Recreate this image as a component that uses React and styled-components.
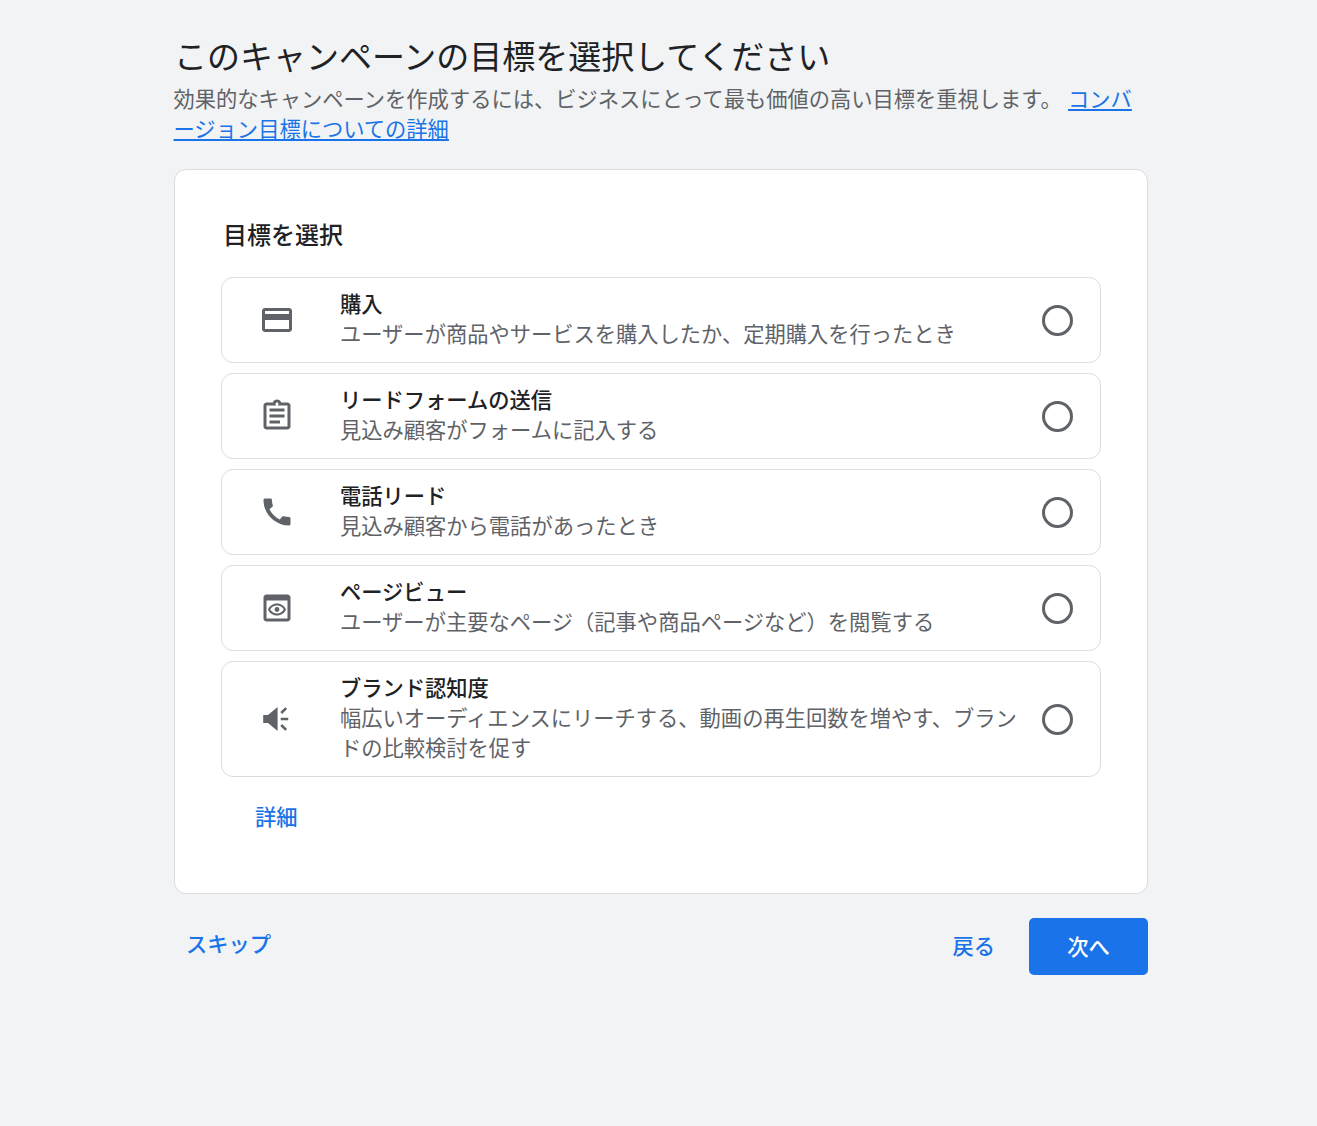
import styled, { createGlobalStyle } from "styled-components";

const GlobalStyle = createGlobalStyle`
  html, body {
    margin: 0;
    padding: 0;
    background: #f1f3f4;
    font-family: Roboto, "Noto Sans CJK JP", sans-serif;
  }
`;

const CardIcon = () => (
  <svg viewBox="0 0 24 24" fill="currentColor">
    <path d="M20 4H4c-1.11 0-1.99.89-1.99 2L2 18c0 1.11.89 2 2 2h16c1.11 0 2-.89 2-2V6c0-1.11-.89-2-2-2zm0 14H4v-6h16v6zm0-10H4V6h16v2z" />
  </svg>
);

const ClipboardIcon = () => (
  <svg viewBox="0 0 24 24" fill="currentColor">
    <path d="M19 3h-4.18C14.4 1.84 13.3 1 12 1c-1.3 0-2.4.84-2.82 2H5c-1.1 0-2 .9-2 2v14c0 1.1.9 2 2 2h14c1.1 0 2-.9 2-2V5c0-1.1-.9-2-2-2zm-7 0c.55 0 1 .45 1 1s-.45 1-1 1-1-.45-1-1 .45-1 1-1zm7 16H5V5h14v14zM7 15h7v2H7zm0-4h10v2H7zm0-4h10v2H7z" />
  </svg>
);

const PhoneIcon = () => (
  <svg viewBox="0 0 24 24" fill="currentColor">
    <path d="M20.01 15.38c-1.23 0-2.42-.2-3.53-.56-.35-.12-.74-.03-1.01.24l-1.57 1.97c-2.83-1.35-5.48-3.9-6.89-6.83l1.95-1.66c.27-.28.35-.67.24-1.02-.37-1.11-.56-2.3-.56-3.53 0-.54-.45-.99-.99-.99H4.19C3.65 3 3 3.24 3 3.99 3 13.28 10.73 21 20.01 21c.71 0 .99-.63.99-1.18v-3.45c0-.54-.45-.99-.99-.99z" />
  </svg>
);

const PreviewIcon = () => (
  <svg viewBox="0 0 24 24" fill="currentColor">
    <path d="M19 3H5c-1.11 0-2 .9-2 2v14c0 1.1.89 2 2 2h14c1.1 0 2-.9 2-2V5c0-1.1-.89-2-2-2zm0 16H5V7h14v12z" />
    <path d="M12 9c-2.73 0-5.06 1.66-6 4 .94 2.34 3.27 4 6 4s5.06-1.66 6-4c-.94-2.34-3.27-4-6-4zm0 6.6c-2 0-3.7-1-4.5-2.6.8-1.6 2.5-2.6 4.5-2.6s3.7 1 4.5 2.6c-.8 1.6-2.5 2.6-4.5 2.6z" />
    <circle cx="12" cy="13" r="1.6" />
  </svg>
);

const SpeakerIcon = () => (
  <svg viewBox="0 0 24 24" fill="currentColor">
    <path d="M2.8 9.3v5.4H6l6.4 5.3V4L6 9.3z" />
    <path d="M14.5 11.15h5v1.7h-5z" />
    <path d="M14.8 8l3.3-3.3M14.8 16l3.3 3.3" fill="none" stroke="currentColor" strokeWidth="1.7" />
  </svg>
);

const goals = [
  {
    icon: <CardIcon />,
    title: "購入",
    text: "ユーザーが商品やサービスを購入したか、定期購入を行ったとき",
  },
  {
    icon: <ClipboardIcon />,
    title: "リードフォームの送信",
    text: "見込み顧客がフォームに記入する",
  },
  {
    icon: <PhoneIcon />,
    title: "電話リード",
    text: "見込み顧客から電話があったとき",
  },
  {
    icon: <PreviewIcon />,
    title: "ページビュー",
    text: "ユーザーが主要なページ（記事や商品ページなど）を閲覧する",
  },
  {
    icon: <SpeakerIcon />,
    title: "ブランド認知度",
    text: "幅広いオーディエンスにリーチする、動画の再生回数を増やす、ブランドの比較検討を促す",
  },
];

export default function App() {
  return (
    <Page>
      <GlobalStyle />
      <Heading>このキャンペーンの目標を選択してください</Heading>
      <Intro>
        効果的なキャンペーンを作成するには、ビジネスにとって最も価値の高い目標を重視します。{" "}
        <IntroLink href="#">コンバージョン目標についての詳細</IntroLink>
      </Intro>
      <Card>
        <CardTitle>目標を選択</CardTitle>
        <GoalList>
          {goals.map((goal) => (
            <GoalRow key={goal.title}>
              <GoalIcon>{goal.icon}</GoalIcon>
              <GoalBody>
                <GoalTitle>{goal.title}</GoalTitle>
                <GoalText>{goal.text}</GoalText>
              </GoalBody>
              <Radio />
            </GoalRow>
          ))}
        </GoalList>
        <MoreLink>詳細</MoreLink>
      </Card>
      <Footer>
        <SkipButton>スキップ</SkipButton>
        <FooterActions>
          <BackButton>戻る</BackButton>
          <NextButton>次へ</NextButton>
        </FooterActions>
      </Footer>
    </Page>
  );
}

const Page = styled.div`
  box-sizing: border-box;
  width: 974px;
  min-height: 1126px;
  margin-left: 174px;
  padding-top: 34px;
`;

const Heading = styled.h1`
  margin: 0;
  font-size: 33px;
  font-weight: 400;
  line-height: 48px;
  color: #202124;
`;

const Intro = styled.p`
  margin: 3px 0 0 -0.5px;
  font-size: 21.27px;
  line-height: 30px;
  word-spacing: 1px;
  color: #5f6368;
`;

const IntroLink = styled.a`
  color: #1a73e8;
  text-decoration: underline;
`;

const Card = styled.section`
  box-sizing: border-box;
  height: 725px;
  margin-top: 24px;
  padding: 48px 46px 0;
  background: #fff;
  border: 1px solid #dadce0;
  border-radius: 12px;
`;

const CardTitle = styled.h2`
  margin: 0 0 23px 2px;
  font-size: 24px;
  font-weight: 500;
  line-height: 36px;
  color: #202124;
`;

const GoalList = styled.div`
  display: flex;
  flex-direction: column;
  gap: 10px;
`;

const GoalRow = styled.div`
  box-sizing: border-box;
  display: flex;
  align-items: center;
  min-height: 86px;
  padding: 12px 27px 12px 0;
  border: 1px solid #dadce0;
  border-radius: 12px;
`;

const GoalIcon = styled.div`
  flex: none;
  display: flex;
  justify-content: center;
  width: 110px;
  margin-right: 8px;
  color: #5f6368;

  svg {
    display: block;
    width: 36px;
    height: 36px;
  }
`;

const GoalBody = styled.div`
  flex: 1;
  min-width: 0;
  padding-right: 16px;
`;

const GoalTitle = styled.div`
  font-size: 21.27px;
  font-weight: 500;
  line-height: 30px;
  color: #202124;
`;

const GoalText = styled.div`
  font-size: 21.27px;
  line-height: 30px;
  color: #5f6368;
`;

const Radio = styled.span`
  flex: none;
  box-sizing: border-box;
  width: 31px;
  height: 31px;
  border: 3.3px solid #5f6368;
  border-radius: 50%;
`;

const TextButton = styled.button`
  padding: 0;
  border: none;
  background: none;
  font-family: inherit;
  font-size: 21.27px;
  font-weight: 500;
  line-height: 30px;
  color: #1a73e8;
  cursor: pointer;
`;

const MoreLink = styled(TextButton)`
  display: block;
  margin: 26px 0 0 34px;
`;

const Footer = styled.div`
  display: flex;
  justify-content: space-between;
  align-items: flex-start;
  margin-top: 24px;
`;

const SkipButton = styled(TextButton)`
  margin: 12px 0 0 12px;
`;

const FooterActions = styled.div`
  display: flex;
  align-items: center;
  gap: 34px;
`;

const BackButton = styled(TextButton)`
  padding-top: 1px;
`;

const NextButton = styled(TextButton)`
  width: 119px;
  height: 57px;
  padding-top: 2px;
  background: #1a73e8;
  border-radius: 5px;
  color: #fff;
`;
